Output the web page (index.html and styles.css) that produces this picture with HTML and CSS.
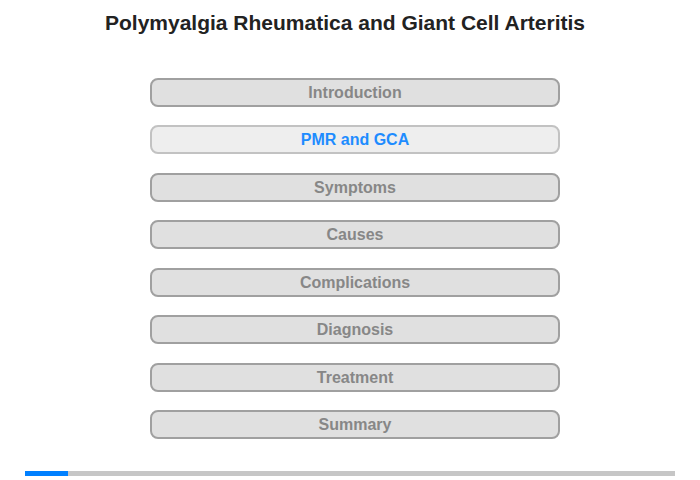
FILE: index.html
```html
<!DOCTYPE html>
<html lang="en">
    <head>
        <meta charset="UTF-8" />
        <meta content="width=device-width, initial-scale=1.0" name="viewport" />
        <title>Polymyalgia Rheumatica and Giant Cell Arteritis</title>
        <link rel="stylesheet" href="styles.css">
    </head>

    <body>
        <div id="app">
            <h1 class="title">Polymyalgia Rheumatica and Giant Cell Arteritis</h1>
            <div class="menu">
                <div class="menu-item">Introduction</div>
                <div class="menu-item active">PMR and GCA</div>
                <div class="menu-item">Symptoms</div>
                <div class="menu-item">Causes</div>
                <div class="menu-item">Complications</div>
                <div class="menu-item">Diagnosis</div>
                <div class="menu-item">Treatment</div>
                <div class="menu-item">Summary</div>
            </div>
            <div class="progress">
                <div class="progress-fill" style="width: 43px"></div>
            </div>
        </div>
    </body>
</html>
```

FILE: styles.css
```css
html {
    background-color: white;
}

body {
    margin: 0;
    font-family: "Liberation Sans", Arial, sans-serif;
}
#app {
    width: 700px;
    height: 480px;
    display: flex;
    flex-direction: column;
}
.title {
    margin: 0;
    padding-top: 11px;
    height: 24px;
    line-height: 24px;
    font-size: 21px;
    font-weight: bold;
    color: #222;
    text-align: center;
    width: 690px;
}
.menu {
    display: flex;
    flex-direction: column;
    gap: 18.45px;
    padding-left: 150px;
    margin-top: 43px;
}
.menu-item {
    box-sizing: border-box;
    width: 410px;
    height: 29px;
    line-height: 25px;
    border: 2px solid #a0a0a0;
    border-radius: 8px;
    background-color: #e0e0e0;
    color: #878787;
    font-size: 16px;
    font-weight: bold;
    text-align: center;
}
.menu-item.active {
    border-color: #c2c2c2;
    background-color: #eeeeee;
    color: #1e8cff;
}
.progress {
    margin: 31.85px 0 0 25px;
    width: 650px;
    height: 5px;
    background-color: #c6c6c6;
}
.progress-fill {
    height: 100%;
    background-color: #0080ff;
}
```
